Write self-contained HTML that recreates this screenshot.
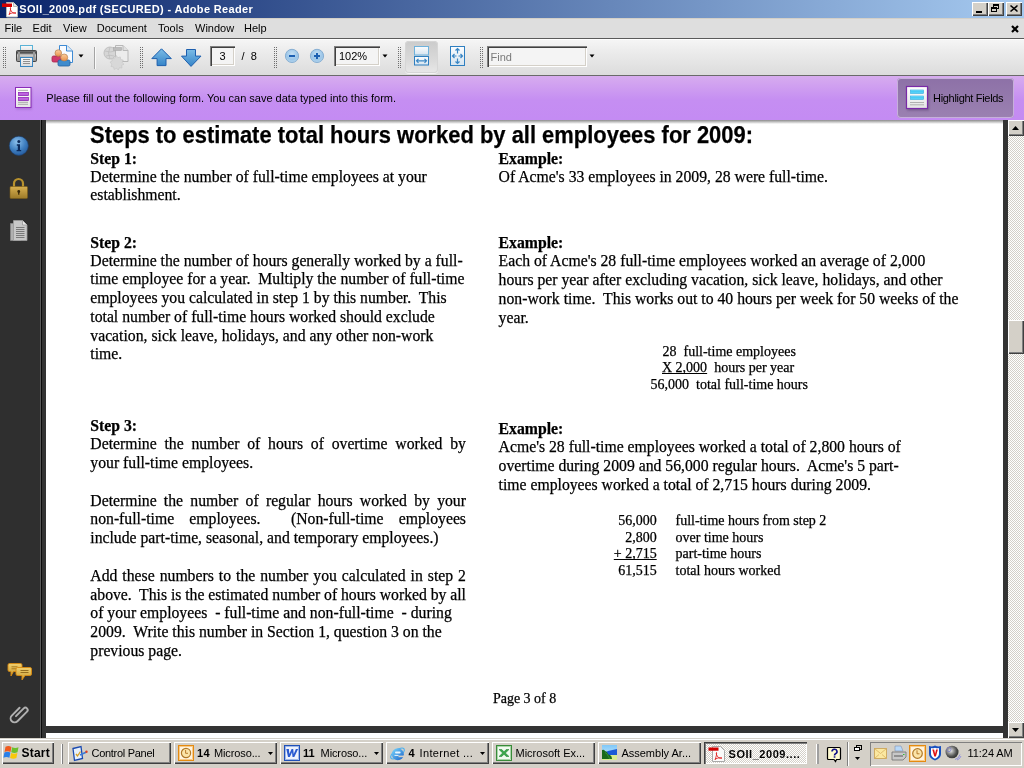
<!DOCTYPE html>
<html><head><meta charset="utf-8">
<style>
*{margin:0;padding:0;box-sizing:border-box}
html,body{width:1024px;height:768px;overflow:hidden;background:#333;font-family:"Liberation Sans",sans-serif;font-size:11px;color:#000}
.a{position:absolute}
svg{position:absolute;overflow:visible}
#title{left:0;top:0;width:1024px;height:18px;background:linear-gradient(to right,#0A246A,#A6CAF0)}
#title .t{left:19.3px;top:2px;color:#fff;font-weight:bold;font-size:11px;letter-spacing:0.34px;line-height:14px;white-space:nowrap}
.rz{background:#D4D0C8;box-shadow:inset 1px 1px 0 #fff,inset -1px -1px 0 #404040,inset -2px -2px 0 #808080}
.tb{top:2px;width:16px;height:14px}
#menu{left:0;top:18px;width:1024px;height:21px;background:#DEDEDE;border-top:1px solid #D4D0C8;border-bottom:1px solid #5a5a5a}
#menu span{position:absolute;top:2px;line-height:14px;white-space:nowrap}
#tool{left:0;top:39px;width:1024px;height:37px;background:linear-gradient(#F6F6F6,#EDEDED 30%,#DCDCDC);box-shadow:inset 0 1px 0 #fff;border-bottom:1px solid #6a6a6a}
.grip{width:3px;background-image:radial-gradient(circle,#8c8c8c 0.7px,transparent 0.8px);background-size:3px 3px}
.inp{background:#F4F4F4;box-shadow:inset 1px 1px 0 #808080,inset 2px 2px 0 #404040,inset -1px -1px 0 #fff,inset -2px -2px 0 #D4D0C8}
#purple{left:0;top:76px;width:1024px;height:44px;background:linear-gradient(#D7ACEF,#C58EF2 55%,#C48BF3)}
#side{left:0;top:120px;width:40px;height:618px;background:#2f2f2f}
#sidel{left:40px;top:120px;width:1px;height:618px;background:#5a5a5a}
#gap{left:41px;top:120px;width:5px;height:618px;background:#333;border-left:1px solid #0a0a0a}
#page{left:46px;top:120px;width:957px;height:606px;background:#fff;overflow:hidden}
#page2{left:46px;top:733px;width:957px;height:5px;background:#fff}
#vgap{left:1003px;top:120px;width:5px;height:618px;background:#333}
#hgap{left:46px;top:726px;width:957px;height:7px;background:#333}
#sb{left:1008px;top:120px;width:16px;height:618px;background-color:#ECEBE6;background-image:repeating-conic-gradient(#fff 0 25%,#D4D0C8 0 50%);background-size:2px 2px}
#task{left:0;top:738px;width:1024px;height:30px;background:#D4D0C8;box-shadow:inset 0 1px 0 #D4D0C8,inset 0 2px 0 #fff}
.btn{height:22px}
.tt{position:absolute;top:8px;line-height:14px;white-space:nowrap;font-size:11px;letter-spacing:-.27px}
.tt b{letter-spacing:.3px}
.p{position:absolute;font-family:"Liberation Serif",serif;line-height:18px;white-space:pre;color:#000;-webkit-text-stroke:.25px #000}
.h{font-family:"Liberation Sans",sans-serif;font-weight:bold;font-size:23.2px;line-height:24px;transform:scaleX(.9458);transform-origin:0 0}
u{text-decoration:underline;text-decoration-skip-ink:none;text-underline-offset:1px}
</style></head><body>
<div id="root" style="position:absolute;left:0;top:0;width:1024px;height:768px;will-change:transform">
<div id="title" class="a">
  <svg style="left:2px;top:1px" width="16" height="16" viewBox="0 0 16 16">
    <path d="M4.5 1.5h7l4 4v10.5h-11z" fill="#fff" stroke="#b8b8b8" stroke-width="1"/>
    <path d="M11.5 1.5v4h4" fill="#e8e8e8" stroke="#b8b8b8"/>
    <rect x="0" y="2.5" width="10" height="3.5" fill="#d40000"/>
    <path d="M7 14c1-3 2-6 1.5-7.5c-.5 1.5 0 3 2 5c1 1 3 1 3.5.5c-1.5-.7-4-.3-7 1.2" fill="none" stroke="#e02020" stroke-width=".9"/>
  </svg>
  <div class="a t">SOII_2009.pdf (SECURED) - Adobe Reader</div>
  <div class="a tb rz" style="left:972px"><div class="a" style="left:4px;top:9px;width:6px;height:2px;background:#000"></div></div>
  <div class="a tb rz" style="left:988px">
    <div class="a" style="left:5px;top:2px;width:6px;height:5px;border:1px solid #000;border-top-width:2px"></div>
    <div class="a" style="left:3px;top:5px;width:6px;height:5px;border:1px solid #000;border-top-width:2px;background:#D4D0C8"></div>
  </div>
  <div class="a tb rz" style="left:1006px">
    <svg style="left:4px;top:3px" width="8" height="7" viewBox="0 0 8 7"><path d="M0.5 0.5L7.5 6.5M7.5 0.5L0.5 6.5" stroke="#000" stroke-width="1.6"/></svg>
  </div>
</div>
<div id="menu" class="a">
  <span style="left:4.5px">File</span>
  <span style="left:32.6px">Edit</span>
  <span style="left:63px">View</span>
  <span style="left:96.7px">Document</span>
  <span style="left:158px">Tools</span>
  <span style="left:195px">Window</span>
  <span style="left:244px">Help</span>
  <svg style="left:1011px;top:6px" width="8" height="8" viewBox="0 0 8 8"><path d="M1 1L7 7M7 1L1 7" stroke="#000" stroke-width="2.2"/></svg>
</div>
<div id="tool" class="a">
<svg style="left:0;top:0" width="0" height="0"><defs><pattern id="gp" width="2" height="2" patternUnits="userSpaceOnUse"><rect width="1" height="1" fill="#6e6e6e"/></pattern></defs></svg>
<svg style="left:3px;top:8px" width="3" height="21" viewBox="0 0 3 21"><rect width="3" height="21" fill="url(#gp)"/></svg>
<!-- printer -->
<svg style="left:15px;top:5px" width="23" height="24" viewBox="0 0 23 24">
  <defs><linearGradient id="pb" x1="0" y1="0" x2="0" y2="1"><stop offset="0" stop-color="#808080"/><stop offset=".22" stop-color="#4a4a4a"/><stop offset=".4" stop-color="#d0d0d0"/><stop offset=".65" stop-color="#b0b0b0"/><stop offset="1" stop-color="#808080"/></linearGradient>
  <linearGradient id="pp" x1="0" y1="0" x2="0" y2="1"><stop offset="0" stop-color="#fafafa"/><stop offset="1" stop-color="#dcdcdc"/></linearGradient></defs>
  <rect x="5.5" y="1.5" width="12" height="7" fill="url(#pp)" stroke="#5ab2d6"/>
  <rect x="1.5" y="6.5" width="20" height="11" rx="1" fill="url(#pb)" stroke="#454545"/>
  <rect x="3" y="8" width="2" height="9" fill="#9a9a9a"/><rect x="18" y="8" width="2" height="9" fill="#9a9a9a"/>
  <rect x="5.5" y="13.5" width="12" height="9" fill="url(#pp)" stroke="#3a86c0"/>
  <path d="M8 15.5h7M8 17.5h7M8 19.5h7" stroke="#909090" stroke-width="1"/>
</svg>
<!-- collaborate -->
<svg style="left:51px;top:5px" width="24" height="24" viewBox="0 0 24 24">
  <defs><linearGradient id="hd" x1="0" y1="0" x2="0" y2="1"><stop offset="0" stop-color="#fcd0a0"/><stop offset="1" stop-color="#e89048"/></linearGradient></defs>
  <path d="M8.5 1.5h7.5l5.5 5.5v11.5h-13z" fill="#f8fbff" stroke="#3d8ad4"/>
  <path d="M15.5 1.5v5.5h6" fill="#dfeaf5" stroke="#3d8ad4"/>
  <rect x="1" y="12" width="9" height="6" rx="1.5" fill="#cf3a6b" stroke="#a8244c" stroke-width=".8"/>
  <circle cx="7.3" cy="9.1" r="3.3" fill="url(#hd)" stroke="#b8804c" stroke-width=".7"/>
  <rect x="7" y="16" width="12" height="6" rx="1.5" fill="#3f8ccd" stroke="#2462a0" stroke-width=".8"/>
  <circle cx="13.2" cy="13.5" r="3.5" fill="url(#hd)" stroke="#b8804c" stroke-width=".7"/>
</svg>
<svg style="left:78px;top:15px" width="6" height="4" viewBox="0 0 6 4"><path d="M0.5 0.5h5l-2.5 3z" fill="#000"/></svg>
<div class="a" style="left:94px;top:8px;width:1px;height:22px;background:#a4a4a4"></div>
<div class="a" style="left:95px;top:8px;width:1px;height:22px;background:#fafafa"></div>
<!-- grey globe/form icon -->
<svg style="left:103px;top:5px" width="27" height="25" viewBox="0 0 27 25">
  <circle cx="7" cy="9" r="6" fill="#d6d6d6" stroke="#c0c0c0"/><path d="M2 7q5 2 10 0M3 12q4-1.5 8 0M7 3q-3 6 0 12" fill="none" stroke="#bcbcbc" stroke-width=".7"/>
  <path d="M12.5 1.5h7.5l5 5v11h-12.5z" fill="#ececec" stroke="#b8b8b8"/>
  <path d="M20 1.5v5h5" fill="#e0e0e0" stroke="#b8b8b8"/>
  <rect x="10.5" y="3.5" width="8" height="3" fill="#bdbdbd" stroke="#a8a8a8" stroke-width=".6"/>
  <path d="M13.4 11.5l1.4 2.2 2.5-.8.4 2.6 2.6.6-1.2 2.3 1.9 1.8-2.4 1.2.4 2.6-2.6-.3-1.1 2.4-1.8-1.9-2.3 1.3-.6-2.6-2.6-.4.9-2.5-2-1.7 2.3-1.3-.6-2.6 2.7.2z" fill="#d8d8d8" stroke="#c4c4c4" stroke-width=".6"/>
</svg>
<svg style="left:140px;top:8px" width="3" height="21" viewBox="0 0 3 21"><rect width="3" height="21" fill="url(#gp)"/></svg>
<!-- up / down arrows -->
<svg style="left:151px;top:9px" width="22" height="20" viewBox="0 0 22 20">
  <defs><linearGradient id="ab" x1="0" y1="0" x2="0" y2="1"><stop offset="0" stop-color="#7cbce6"/><stop offset="1" stop-color="#3584c8"/></linearGradient></defs>
  <path d="M10.5 0.8L20.3 10.6H15v7H6.1v-7H0.8z" fill="url(#ab)" stroke="#1d5fae" stroke-width="1" stroke-linejoin="miter"/>
</svg>
<svg style="left:181px;top:10px" width="22" height="20" viewBox="0 0 22 20">
  <path d="M5.5 0.5h9v6.6h5.5L10 17.4L0.5 7.1h5z" fill="url(#ab)" stroke="#1d5fae" stroke-width="1"/>
</svg>
<!-- page number box -->
<div class="a inp" style="left:210px;top:7px;width:25px;height:20px"></div>
<div class="a" style="left:210px;top:11px;width:25px;text-align:center;font-size:11px;line-height:12px">3</div>
<div class="a" style="left:241.5px;top:11px;font-size:11px;line-height:12px;white-space:pre">/  8</div>
<svg style="left:274px;top:8px" width="3" height="21" viewBox="0 0 3 21"><rect width="3" height="21" fill="url(#gp)"/></svg>
<!-- zoom out / in -->
<svg style="left:284px;top:48px" width="16" height="16" viewBox="0 0 16 16"></svg>
<svg style="left:284px;top:9px" width="16" height="16" viewBox="0 0 16 16">
  <defs><radialGradient id="zb" cx=".5" cy=".35" r=".7"><stop offset="0" stop-color="#c6e0f4"/><stop offset=".6" stop-color="#9cc6e8"/><stop offset="1" stop-color="#b8d8f0"/></radialGradient></defs>
  <circle cx="8" cy="7.9" r="6.6" fill="url(#zb)" stroke="#86aed2" stroke-width="1"/>
  <rect x="5" y="7" width="6" height="2" fill="#1c60b2"/>
</svg>
<svg style="left:309px;top:9px" width="16" height="16" viewBox="0 0 16 16">
  <circle cx="8" cy="7.9" r="6.6" fill="url(#zb)" stroke="#86aed2" stroke-width="1"/>
  <rect x="5" y="7" width="6" height="2" fill="#1c60b2"/><rect x="7" y="5" width="2" height="6" fill="#1c60b2"/>
</svg>
<!-- zoom box -->
<div class="a inp" style="left:334px;top:7px;width:46px;height:20px"></div>
<div class="a" style="left:339px;top:11px;font-size:11px;line-height:12px">102%</div>
<svg style="left:382px;top:15px" width="6" height="4" viewBox="0 0 6 4"><path d="M0.5 0.5h5l-2.5 3z" fill="#000"/></svg>
<svg style="left:398px;top:8px" width="3" height="21" viewBox="0 0 3 21"><rect width="3" height="21" fill="url(#gp)"/></svg>
<!-- pressed fit-width button -->
<div class="a" style="left:405px;top:2px;width:33px;height:32px;border-radius:4px;background:linear-gradient(#cbcbcb,#dadada 60%,#e8e8e8);box-shadow:inset 0 0 0 1px #d6d6d6,0 1px 0 #f4f4f4"></div>
<svg style="left:413px;top:7px" width="17" height="21" viewBox="0 0 17 21">
  <defs><linearGradient id="fw" x1="0" y1="0" x2="0" y2="1"><stop offset="0" stop-color="#fbfdff"/><stop offset="1" stop-color="#d6e4ef"/></linearGradient></defs>
  <rect x="1.5" y="0.5" width="14" height="8.5" fill="url(#fw)" stroke="#6fb2dc"/>
  <rect x="1.5" y="10.5" width="14" height="8.5" fill="url(#fw)" stroke="#2f7fc0"/>
  <path d="M3.5 14.8h10M5.5 12.8l-2 2 2 2M11.5 12.8l2 2-2 2" fill="none" stroke="#3a86c4" stroke-width="1.2"/>
</svg>
<!-- full screen icon -->
<svg style="left:449px;top:7px" width="17" height="21" viewBox="0 0 17 21">
  <rect x="1.5" y="0.5" width="14" height="19" fill="url(#fw)" stroke="#2f7fc0"/>
  <path d="M8.5 2.5v5M6.5 4.5l2-2 2 2M8.5 12.5v5M6.5 15.5l2 2 2-2M3.5 10h4M5.5 8l-2 2 2 2M9.5 10h4M11.5 8l2 2-2 2" fill="none" stroke="#3a86c4" stroke-width="1.2"/>
</svg>
<svg style="left:480px;top:8px" width="3" height="21" viewBox="0 0 3 21"><rect width="3" height="21" fill="url(#gp)"/></svg>
<!-- find -->
<div class="a inp" style="left:487px;top:7px;width:100px;height:21px"></div>
<div class="a" style="left:490.5px;top:12px;font-size:11px;line-height:12px;color:#7a7a7a">Find</div>
<svg style="left:589px;top:15px" width="6" height="4" viewBox="0 0 6 4"><path d="M0.5 0.5h5l-2.5 3z" fill="#000"/></svg>

</div>
<div id="purple" class="a">
<svg style="left:14px;top:10px" width="20" height="24" viewBox="0 0 20 24">
  <defs>
    <linearGradient id="pd" x1="0" y1="0" x2="0" y2="1"><stop offset="0" stop-color="#ffffff"/><stop offset="1" stop-color="#e4e4e4"/></linearGradient>
    <linearGradient id="pbar" x1="0" y1="0" x2="0" y2="1"><stop offset="0" stop-color="#9b2fc4"/><stop offset=".5" stop-color="#d27ef0"/><stop offset="1" stop-color="#8a22b5"/></linearGradient>
    <filter id="sh" x="-30%" y="-30%" width="160%" height="160%"><feGaussianBlur stdDeviation=".8"/></filter>
  </defs>
  <rect x="2" y="2.5" width="16" height="21" fill="#7a3fa0" opacity=".35" filter="url(#sh)"/>
  <rect x="1.5" y="1.5" width="15.5" height="20" fill="url(#pd)" stroke="#8a2cb8"/>
  <path d="M4 4.3h10M4 16.3h10M4 18.3h10" stroke="#a8a8a8" stroke-width="1"/>
  <rect x="4.5" y="6.5" width="10" height="3" fill="url(#pbar)" stroke="#8a22b5" stroke-width=".7"/>
  <rect x="4.5" y="11.5" width="10" height="3" fill="url(#pbar)" stroke="#8a22b5" stroke-width=".7"/>
</svg>
<!-- highlight fields button -->
<div class="a" style="left:897px;top:2px;width:117px;height:40px;border-radius:4px;background:linear-gradient(#8d71a7,#9b81b1);box-shadow:inset 0 0 0 1px #c6b0da"></div>
<svg style="left:905px;top:9px" width="24" height="25" viewBox="0 0 24 25">
  <defs><linearGradient id="hb" x1="0" y1="0" x2="0" y2="1"><stop offset="0" stop-color="#8ee8ff"/><stop offset=".5" stop-color="#3cc6f4"/><stop offset="1" stop-color="#78dcfa"/></linearGradient></defs>
  <rect x="2" y="2.5" width="22" height="23" fill="#3a2050" opacity=".35" filter="url(#sh)"/>
  <rect x="1.5" y="1.5" width="21" height="22" fill="url(#pd)" stroke="#7a2aa8" stroke-width="1.2"/>
  <rect x="5.5" y="5" width="13" height="3.5" fill="url(#hb)" stroke="#2aa8e0" stroke-width=".6"/>
  <rect x="5.5" y="11" width="13" height="3.5" fill="url(#hb)" stroke="#2aa8e0" stroke-width=".6"/>
  <path d="M5 17.5h14M5 19.8h14" stroke="#b0b0b0" stroke-width="1"/>
</svg>
<div class="a" style="left:933px;top:15px;line-height:14px;white-space:nowrap;font-size:11px;letter-spacing:-.307px">Highlight Fields</div>

  <div class="a" style="left:46.3px;top:15px;line-height:14px;white-space:nowrap">Please fill out the following form. You can save data typed into this form.</div>
</div>
<div id="side" class="a">
<svg style="left:8px;top:15px" width="22" height="22" viewBox="0 0 22 22">
  <defs><radialGradient id="ig" cx=".4" cy=".3" r=".8"><stop offset="0" stop-color="#8cc0ec"/><stop offset=".55" stop-color="#3f7fc0"/><stop offset="1" stop-color="#1f5296"/></radialGradient></defs>
  <circle cx="10.8" cy="10.8" r="9.6" fill="url(#ig)" stroke="#1c3e6c" stroke-width=".6"/>
  <circle cx="10.8" cy="6.6" r="1.5" fill="#0d2a5a"/>
  <path d="M8.8 9.3h3.2v5.6h1.2v1.4h-4.6v-1.4h1.2v-4.2h-1z" fill="#0d2a5a"/>
</svg>
<svg style="left:9px;top:56px" width="20" height="24" viewBox="0 0 20 24">
  <defs><linearGradient id="lk" x1="0" y1="0" x2="0" y2="1"><stop offset="0" stop-color="#d8b050"/><stop offset="1" stop-color="#9c7a28"/></linearGradient></defs>
  <path d="M5 11V7.5a4.5 4.5 0 0 1 9 0V11" fill="none" stroke="#b8922e" stroke-width="2.2"/>
  <rect x="1" y="10.5" width="17.5" height="12" rx="1" fill="url(#lk)" stroke="#7a5c18" stroke-width=".6"/>
  <circle cx="9.75" cy="15.5" r="1.4" fill="#3a2a08"/><rect x="9.1" y="15.5" width="1.3" height="3.2" fill="#3a2a08"/>
</svg>
<svg style="left:8px;top:99px" width="22" height="24" viewBox="0 0 22 24">
  <path d="M2.5 4.5h10l0 0v17h-10z" fill="#b0b0b0" stroke="#8a8a8a" stroke-width=".8"/>
  <path d="M5.5 1.5h9l4.5 4.5v15.5h-13.5z" fill="#c8c8c8" stroke="#9a9a9a" stroke-width=".8"/>
  <path d="M14.5 1.5v4.5h4.5" fill="#e8e8e8" stroke="#9a9a9a" stroke-width=".8"/>
  <path d="M8 8.5h8.5M8 10.5h8.5M8 12.5h8.5M8 14.5h8.5M8 16.5h8.5M8 18.5h8.5" stroke="#7a7a7a" stroke-width="1"/>
</svg>
<svg style="left:7px;top:542px" width="26" height="20" viewBox="0 0 26 20">
  <defs><linearGradient id="cm" x1="0" y1="0" x2="0" y2="1"><stop offset="0" stop-color="#f0d070"/><stop offset="1" stop-color="#c89a30"/></linearGradient></defs>
  <path d="M2.5 1.5h11a1.5 1.5 0 0 1 1.5 1.5v5a1.5 1.5 0 0 1-1.5 1.5h-7l-2.5 4.5v-4.5h-1.5a1.5 1.5 0 0 1-1.5-1.5v-5a1.5 1.5 0 0 1 1.5-1.5z" fill="url(#cm)" stroke="#d88a10" stroke-width=".9"/>
  <path d="M4.5 4.8h6M4.5 6.8h6" stroke="#a07018" stroke-width=".9"/>
  <path d="M10.5 5.5h12.5a1.5 1.5 0 0 1 1.5 1.5v5a1.5 1.5 0 0 1-1.5 1.5h-5l-3 4.5v-4.5h-4.5a1.5 1.5 0 0 1-1.5-1.5v-5a1.5 1.5 0 0 1 1.5-1.5z" fill="url(#cm)" stroke="#d88a10" stroke-width=".9"/>
  <path d="M13.5 8.5h8M13.5 10.5h8" stroke="#8a6418" stroke-width=".9"/>
</svg>
<svg style="left:7px;top:582px" width="22" height="24" viewBox="0 0 22 24">
  <g transform="rotate(45 11.5 12.5)"><path d="M7.5 7v11a4 4 0 0 0 8 0V4.5a2.3 2.3 0 0 0-4.6 0v11" fill="none" stroke="#b0b0b0" stroke-width="1.9" stroke-linecap="round"/></g>
</svg>

</div>
<div id="sidel" class="a"></div>
<div id="gap" class="a"></div>
<div id="vgap" class="a"></div>
<div id="hgap" class="a"></div>
<div id="page" class="a"><div class="a" style="left:0;top:0;width:957px;height:4px;background:linear-gradient(#8c8c8c,#fff)"></div></div>
<div id="page2" class="a"></div>
<div id="sb" class="a">
<div class="a rz" style="left:0;top:0;width:16px;height:16px;box-shadow:inset 1px 1px 0 #fff,inset -1px -1px 0 #404040,inset -2px -2px 0 #808080"></div>
<svg style="left:4px;top:6px" width="7" height="4" viewBox="0 0 7 4"><path d="M3.5 0L7 4H0z" fill="#000"/></svg>
<div class="a rz" style="left:0;top:200px;width:16px;height:34px;box-shadow:inset 1px 1px 0 #fff,inset -1px -1px 0 #404040,inset -2px -2px 0 #808080"></div>
<div class="a rz" style="left:0;top:602px;width:16px;height:16px;box-shadow:inset 1px 1px 0 #fff,inset -1px -1px 0 #404040,inset -2px -2px 0 #808080"></div>
<svg style="left:4px;top:608px" width="7" height="4" viewBox="0 0 7 4"><path d="M0 0H7L3.5 4z" fill="#000"/></svg>

</div>
<div id="txt" style="position:absolute;left:0;top:0;width:1024px;height:768px">
<div class="p h" style="left:90.2px;top:123px">Steps to estimate total hours worked by all employees for 2009:</div>
<div class="p" style="left:90.3px;top:150px;font-size:15.72px;font-weight:bold">Step 1:</div>
<div class="p" style="left:90.3px;top:168px;font-size:15.72px">Determine the number of full-time employees at your</div>
<div class="p" style="left:90.3px;top:186px;font-size:15.72px">establishment.</div>
<div class="p" style="left:90.3px;top:234px;font-size:15.72px;font-weight:bold">Step 2:</div>
<div class="p" style="left:90.3px;top:252px;font-size:15.72px">Determine the number of hours generally worked by a full-</div>
<div class="p" style="left:90.3px;top:270px;font-size:15.72px">time employee for a year.  Multiply the number of full-time</div>
<div class="p" style="left:90.3px;top:289px;font-size:15.72px">employees you calculated in step 1 by this number.  This</div>
<div class="p" style="left:90.3px;top:308px;font-size:15.72px">total number of full-time hours worked should exclude</div>
<div class="p" style="left:90.3px;top:327px;font-size:15.72px">vacation, sick leave, holidays, and any other non-work</div>
<div class="p" style="left:90.3px;top:345px;font-size:15.72px">time.</div>
<div class="p" style="left:90.3px;top:417px;font-size:15.72px;font-weight:bold">Step 3:</div>
<div class="p" style="left:90.3px;top:435px;font-size:15.72px;word-spacing:3.854px">Determine the number of hours of overtime worked by</div>
<div class="p" style="left:90.3px;top:454px;font-size:15.72px">your full-time employees.</div>
<div class="p" style="left:90.3px;top:492px;font-size:15.72px;word-spacing:3.309px">Determine the number of regular hours worked by your</div>
<div class="p" style="left:90.3px;top:510px;font-size:15.72px;word-spacing:11.309px">non-full-time employees.  (Non-full-time employees</div>
<div class="p" style="left:90.3px;top:529px;font-size:15.72px">include part-time, seasonal, and temporary employees.)</div>
<div class="p" style="left:90.3px;top:567px;font-size:15.72px;word-spacing:1.075px">Add these numbers to the number you calculated in step 2</div>
<div class="p" style="left:90.3px;top:586px;font-size:15.72px;word-spacing:-0.110px">above.  This is the estimated number of hours worked by all</div>
<div class="p" style="left:90.3px;top:604px;font-size:15.72px">of your employees  - full-time and non-full-time  - during</div>
<div class="p" style="left:90.3px;top:623px;font-size:15.72px">2009.  Write this number in Section 1, question 3 on the</div>
<div class="p" style="left:90.3px;top:642px;font-size:15.72px">previous page.</div>
<div class="p" style="left:498.6px;top:150px;font-size:15.72px;font-weight:bold">Example:</div>
<div class="p" style="left:498.6px;top:168px;font-size:15.72px">Of Acme&#x27;s 33 employees in 2009, 28 were full-time.</div>
<div class="p" style="left:498.6px;top:234px;font-size:15.72px;font-weight:bold">Example:</div>
<div class="p" style="left:498.6px;top:252px;font-size:15.72px">Each of Acme&#x27;s 28 full-time employees worked an average of 2,000</div>
<div class="p" style="left:498.6px;top:271px;font-size:15.72px">hours per year after excluding vacation, sick leave, holidays, and other</div>
<div class="p" style="left:498.6px;top:290px;font-size:15.72px">non-work time.  This works out to 40 hours per week for 50 weeks of the</div>
<div class="p" style="left:498.6px;top:309px;font-size:15.72px">year.</div>
<div class="p" style="left:662.5px;top:343px;font-size:14px">28  full-time employees</div>
<div class="p" style="left:662px;top:359px;font-size:14px"><u>X 2,000</u>  hours per year</div>
<div class="p" style="left:650.5px;top:376px;font-size:14px">56,000  total full-time hours</div>
<div class="p" style="left:498.6px;top:420px;font-size:15.72px;font-weight:bold">Example:</div>
<div class="p" style="left:498.6px;top:438px;font-size:15.72px">Acme&#x27;s 28 full-time employees worked a total of 2,800 hours of</div>
<div class="p" style="left:498.6px;top:457px;font-size:15.72px">overtime during 2009 and 56,000 regular hours.  Acme&#x27;s 5 part-</div>
<div class="p" style="left:498.6px;top:476px;font-size:15.72px">time employees worked a total of 2,715 hours during 2009.</div>
<div class="p" style="left:618.2px;top:512px;font-size:14px">56,000</div>
<div class="p" style="left:675.5px;top:512px;font-size:14px">full-time hours from step 2</div>
<div class="p" style="left:625.2px;top:529px;font-size:14px">2,800</div>
<div class="p" style="left:675.5px;top:529px;font-size:14px">over time hours</div>
<div class="p" style="left:613.8px;top:545px;font-size:14px"><u>+ 2,715</u></div>
<div class="p" style="left:675.5px;top:545px;font-size:14px">part-time hours</div>
<div class="p" style="left:618.2px;top:562px;font-size:14px">61,515</div>
<div class="p" style="left:675.5px;top:562px;font-size:14px">total hours worked</div>
<div class="p" style="left:492.9px;top:690px;font-size:14px">Page 3 of 8</div>
</div>
<div id="task" class="a">
<!-- start button -->
<div class="a rz" style="left:2px;top:4px;width:52px;height:22px"></div>
<svg style="left:4px;top:7px" width="16" height="14" viewBox="0 0 16 14">
  <path d="M1.5 1.8q3-1.5 6 .2l-1 5q-3-1.5-6 0z" fill="#f05a1c"/>
  <path d="M8.2 2.2q3 1.6 6.3 0l-1 5q-3 1.5-6.3 0z" fill="#6cc02a"/>
  <path d="M0.4 7.5q3-1.5 6 .1l-1 5.2q-3-1.5-6 0z" fill="#2a80e8"/>
  <path d="M7.1 7.9q3 1.6 6.3 0l-1 5q-3 1.5-6.3 0z" fill="#f8c80a"/>
</svg>
<div class="a" style="left:21.6px;top:8px;font-weight:bold;font-size:12px;line-height:14px;letter-spacing:.2px">Start</div>
<!-- separator grip -->
<div class="a" style="left:61px;top:6px;width:1px;height:20px;background:#fff"></div>
<div class="a" style="left:62px;top:6px;width:1px;height:20px;background:#808080"></div>
<!-- Control Panel -->
<div class="a rz btn" style="left:68px;top:4px;width:103px"></div>
<svg style="left:72px;top:7px" width="16" height="16" viewBox="0 0 16 16">
  <path d="M1 3.5l8-2 1.5 12-8 2z" fill="#e8f0fa" stroke="#1a4ab0" stroke-width="1.3"/>
  <path d="M4 9l1.5 2 3-4.5" fill="none" stroke="#d8a020" stroke-width="1.3"/>
  <path d="M8 10l6.5-3" stroke="#3a7ad8" stroke-width="1.5"/><circle cx="14.5" cy="6.8" r="1.2" fill="#e04020"/>
</svg>
<div class="a tt" style="left:91.5px;letter-spacing:-.29px">Control Panel</div>
<!-- Outlook -->
<div class="a rz btn" style="left:174px;top:4px;width:103px"></div>
<svg style="left:178px;top:7px" width="16" height="16" viewBox="0 0 16 16">
  <rect x=".5" y=".5" width="15" height="15" fill="#fff4de" stroke="#e48a10"/>
  <rect x="1.5" y="1.5" width="13" height="13" fill="none" stroke="#f8c070" stroke-width=".8"/>
  <circle cx="8" cy="8" r="4.6" fill="#fbe4a8" stroke="#b07828" stroke-width="1.2"/>
  <path d="M7.6 5v3.3h2.4" fill="none" stroke="#b07020" stroke-width=".9"/>
</svg>
<div class="a tt" style="left:197px;font-weight:bold;letter-spacing:.4px">14</div><div class="a tt" style="left:214px;letter-spacing:-.12px">Microso...</div>
<svg style="left:268px;top:14px" width="6" height="4" viewBox="0 0 6 4"><path d="M0 0h5l-2.5 3z" fill="#000"/></svg>
<!-- Word -->
<div class="a rz btn" style="left:280px;top:4px;width:103px"></div>
<svg style="left:284px;top:7px" width="16" height="16" viewBox="0 0 16 16">
  <rect x=".5" y=".5" width="15" height="15" fill="#eef2fc" stroke="#2050b8"/>
  <rect x="1.5" y="1.5" width="13" height="13" fill="none" stroke="#7ea0e0" stroke-width=".7"/>
  <path d="M2.3 4h2.6l.4 5 2.3-5h1.6l.5 5 2.2-5h2.2l-3.8 8h-1.8l-.5-4.8-2.2 4.8h-1.8z" fill="#2a5ad0"/>
</svg>
<div class="a tt" style="left:303px;font-weight:bold;letter-spacing:.1px">11</div><div class="a tt" style="left:320.6px;letter-spacing:-.12px">Microso...</div>
<svg style="left:374px;top:14px" width="6" height="4" viewBox="0 0 6 4"><path d="M0 0h5l-2.5 3z" fill="#000"/></svg>
<!-- IE -->
<div class="a rz btn" style="left:386px;top:4px;width:103px"></div>
<svg style="left:389px;top:7px" width="17" height="17" viewBox="0 0 17 17">
  <defs><linearGradient id="ie" x1="0" y1="0" x2="1" y2="1"><stop offset="0" stop-color="#7ad8ff"/><stop offset="1" stop-color="#1a62c8"/></linearGradient></defs>
  <ellipse cx="8.5" cy="8.5" rx="8" ry="3.6" transform="rotate(-35 8.5 8.5)" fill="none" stroke="#4ab0f0" stroke-width="1.1"/>
  <circle cx="8.8" cy="9.2" r="6" fill="url(#ie)"/>
  <rect x="6" y="6.6" width="5.6" height="2" rx="1" fill="#e8f6ff"/>
  <rect x="9.5" y="10.6" width="6" height="1.6" fill="#d4d0c8"/>
  <path d="M5.5 10.4h4" stroke="#e8f6ff" stroke-width="1"/>
</svg>
<div class="a tt" style="left:408.6px;font-weight:bold">4</div><div class="a tt" style="left:419.6px;letter-spacing:.33px">Internet ...</div>
<svg style="left:480px;top:14px" width="6" height="4" viewBox="0 0 6 4"><path d="M0 0h5l-2.5 3z" fill="#000"/></svg>
<!-- Excel -->
<div class="a rz btn" style="left:492px;top:4px;width:103px"></div>
<svg style="left:496px;top:7px" width="16" height="16" viewBox="0 0 16 16">
  <rect x=".5" y=".5" width="15" height="15" fill="#f2faf0" stroke="#3a8a3a"/>
  <rect x="1.5" y="1.5" width="13" height="13" fill="none" stroke="#8ac88a" stroke-width=".7"/>
  <path d="M3 4.5h2.8l2.2 2.3 2.2-2.3h2.8l-3.6 3.5 3.6 3.5h-2.8l-2.2-2.3-2.2 2.3h-2.8l3.6-3.5z" fill="#3aa84a" stroke="#1a7a2a" stroke-width=".5"/>
</svg>
<div class="a tt" style="left:515.5px;letter-spacing:0">Microsoft Ex...</div>
<!-- Assembly -->
<div class="a rz btn" style="left:598px;top:4px;width:103px"></div>
<svg style="left:602px;top:7px" width="15" height="15" viewBox="0 0 15 15">
  <defs><linearGradient id="sky" x1="0" y1="0" x2="0" y2="1"><stop offset="0" stop-color="#80c8f8"/><stop offset="1" stop-color="#d8f0ff"/></linearGradient></defs>
  <rect x="0" y="0" width="15" height="15" fill="url(#sky)"/>
  <path d="M0 9l6-3 9-2v6h-15z" fill="#1a5ad8"/>
  <path d="M0 10h15v5h-15z" fill="#d8ec90"/>
  <path d="M0 5q2-1 3 1q2 0 3 3q1 1 2 1q2 1 2 4h-10z" fill="#1a6a1a"/><path d="M3 8q1-1 2 1t3 5" fill="none" stroke="#3a9a3a" stroke-width=".8"/>
</svg>
<div class="a tt" style="left:621.4px;letter-spacing:0">Assembly Ar...</div>
<!-- SOII pressed -->
<div class="a" style="left:704px;top:4px;width:103px;height:22px;background-color:#fff;background-image:repeating-conic-gradient(#D4D0C8 0 25%,#fff 0 50%);background-size:2px 2px;box-shadow:inset 1px 1px 0 #404040,inset 2px 2px 0 #808080,inset -1px -1px 0 #fff"></div>
<svg style="left:708px;top:8px" width="17" height="16" viewBox="0 0 17 16">
  <path d="M4.5 .5h8l4 4v11h-12z" fill="#fafafa" stroke="#a8a8a8"/>
  <rect x="0.5" y="1.5" width="10" height="3.2" fill="#d00000"/>
  <path d="M7 14c1-3 2-6 1.5-7.5c-.5 1.5 0 3 2 5c1 1 3 1 3.5.5c-1.5-.7-4-.3-7 1.2" fill="none" stroke="#e02020" stroke-width=".9"/>
</svg>
<div class="a tt" style="left:728.5px;top:9px;font-weight:bold;letter-spacing:.54px">SOII_2009....</div>
<!-- quick separators & icons -->
<div class="a" style="left:816px;top:6px;width:1px;height:20px;background:#fff"></div>
<div class="a" style="left:817px;top:6px;width:2px;height:20px;background:#a0a0a0"></div>
<svg style="left:827px;top:9px" width="16" height="16" viewBox="0 0 16 16">
  <path d="M1.5 .5h11a1 1 0 0 1 1 1v10a1 1 0 0 1-1 1h-3l-1 2-1.5-2h-5.5a1 1 0 0 1-1-1v-10a1 1 0 0 1 1-1z" fill="#fffbd0" stroke="#000" stroke-width="1.2"/>
  <path d="M5 4.5a2.5 2.3 0 1 1 3.5 2.2q-1 .5-1 1.8" fill="none" stroke="#10108a" stroke-width="1.6"/><rect x="6.7" y="9.3" width="1.7" height="1.4" fill="#10108a"/>
</svg>
<div class="a" style="left:847px;top:4px;width:1px;height:24px;background:#808080"></div>
<div class="a" style="left:848px;top:4px;width:1px;height:24px;background:#fff"></div>
<div class="a" style="left:856px;top:7px;width:6px;height:5px;border:1px solid #000"></div>
<div class="a" style="left:854px;top:9px;width:6px;height:4px;border:1px solid #000;border-top-width:1px;background:#fff"></div>
<svg style="left:855px;top:19px" width="6" height="4" viewBox="0 0 6 4"><path d="M0 0h5l-2.5 3z" fill="#000"/></svg>
<!-- tray -->
<div class="a" style="left:870px;top:4px;width:152px;height:24px;box-shadow:inset 1px 1px 0 #808080,inset -1px -1px 0 #fff"></div>
<svg style="left:874px;top:10px" width="13" height="11" viewBox="0 0 13 11">
  <rect x=".5" y=".5" width="12" height="10" fill="#fbe8a0" stroke="#c8a050" stroke-width=".8"/>
  <path d="M.5 .5l6 5 6-5M.5 10.5l4.5-4M12.5 10.5l-4.5-4" fill="none" stroke="#d8b060" stroke-width=".8"/>
</svg>
<svg style="left:891px;top:7px" width="16" height="16" viewBox="0 0 16 16">
  <path d="M4 1h6l2 5h-8z" fill="#b8d8f8" stroke="#8090b0" stroke-width=".6"/>
  <path d="M1 7h14v5l-3 3h-11z" fill="#c8c8c8" stroke="#707070" stroke-width=".8"/>
  <rect x="3" y="10" width="9" height="2" fill="#909090"/><rect x="12" y="9" width="1.5" height="1" fill="#30c030"/>
</svg>
<svg style="left:909px;top:7px" width="17" height="17" viewBox="0 0 17 17">
  <rect x=".5" y=".5" width="16" height="16" fill="#fff4de" stroke="#e48a10"/>
  <rect x="1.5" y="1.5" width="14" height="14" fill="none" stroke="#f8c070" stroke-width=".8"/>
  <circle cx="8.5" cy="8.5" r="4.8" fill="#fbe4a8" stroke="#b07828" stroke-width="1.2"/>
  <path d="M8 5.3v3.5h2.5" fill="none" stroke="#b07020" stroke-width=".9"/>
</svg>
<svg style="left:928px;top:7px" width="14" height="16" viewBox="0 0 14 16">
  <path d="M1 1q3 1 6-.5q3 1.5 6 .5v8q0 4-6 6.5q-6-2.5-6-6.5z" fill="#1850c0"/>
  <path d="M3 3q2 .6 4-.3q2 .9 4 .3v6q0 2.8-4 4.8q-4-2-4-4.8z" fill="#fff"/>
  <path d="M4.3 4.5h1.8l1 4.2 1-4.2h1.8l-2 7h-1.6z" fill="#e01010"/>
</svg>
<svg style="left:944px;top:7px" width="18" height="16" viewBox="0 0 18 16">
  <defs><radialGradient id="spk" cx=".4" cy=".4" r=".6"><stop offset="0" stop-color="#f0f0f0"/><stop offset=".35" stop-color="#a0a0a0"/><stop offset=".75" stop-color="#505050"/><stop offset="1" stop-color="#383838"/></radialGradient></defs>
  <ellipse cx="8" cy="7" rx="6.5" ry="6.3" fill="url(#spk)"/>
  <ellipse cx="5" cy="4.5" rx="2" ry="2.2" fill="none" stroke="#8080c0" stroke-width=".8"/>
  <path d="M11 14.5q4-1 5-5M13 15q3-1 4-4" fill="none" stroke="#8080e0" stroke-width=".8"/>
</svg>
<div class="a tt" style="left:967.6px;top:8px;letter-spacing:-.07px">11:24 AM</div>

</div>
</div>
</body></html>
